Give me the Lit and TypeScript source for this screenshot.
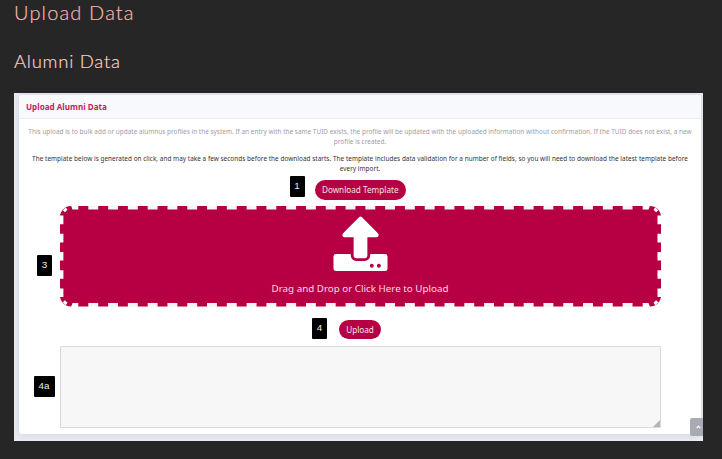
import { LitElement, html, svg, css } from "lit";
import { customElement } from "lit/decorators.js";

const range = (n: number) => Array.from({ length: n }, (_, i) => i);

@customElement("app-root")
export class AppRoot extends LitElement {
  static styles = css`
    :host { display: block; height: 459px; overflow: hidden; background: #262626; font-family: "Noto Sans", sans-serif; }
    * { box-sizing: border-box; }
    h1, h2, h3, p { margin: 0; font-weight: 400; }
    .page { padding: 0 19px 0 14px; height: 459px; display: flex; flex-direction: column; }
    h1, h2 { font-family: Lato, sans-serif; font-weight: 300; white-space: nowrap; }
    h1 { font-size: 20px; line-height: 24px; color: #f9b5b2; letter-spacing: 1.15px; -webkit-text-stroke: .2px #f9b5b2; }
    h2 { font-size: 18.5px; line-height: 26px; margin-top: 24px; margin-bottom: 19px; color: #fdd0ce; letter-spacing: .75px; -webkit-text-stroke: .2px #fdd0ce; }
    .shot { position: relative; height: 348px; background: #eaebf2; padding: 2px 2px 7px 5px; overflow: hidden; }
    .card { height: 339px; background: #fff; border-radius: 3px; box-shadow: 0 1px 7px #58688a2e; overflow: hidden; }
    h3 { height: 24px; line-height: 24px; padding-left: 7px; font-size: 8.1px; font-weight: 700; color: #c42460; background: #f8f9fc; border-bottom: 1px solid #eceef5; white-space: nowrap; }
    .copy { text-align: center; white-space: nowrap; font-size: 6.4px; line-height: 10px; color: #9c9da8; }
    .first { padding-top: 8px; letter-spacing: .032px; }
    .second { padding-top: 7px; color: #333; letter-spacing: .047px; }
    .row { display: flex; align-items: flex-start; }
    .tag { background: #000; color: #eee; border-radius: 1px; width: 15px; height: 21px; line-height: 20px; text-align: center; font-family: "Liberation Sans", sans-serif; font-size: 9.8px; flex: none; }
    .pill { background: #b70043; color: #f7e0e8; border-radius: 10px; height: 19.5px; line-height: 20px; text-align: center; font-size: 8.2px; white-space: nowrap; }
    .download { height: 26px; padding: 2px 0 0 270.5px; gap: 10px; }
    .download .pill { width: 91.5px; margin-top: 4px; }
    .drop { margin-top: 5.5px; padding-left: 18px; align-items: center; gap: 8px; }
    .drop .tag { margin-top: 18px; }
    .zone { width: 601px; height: 101px; position: relative; flex: none; display: flex; flex-direction: column; align-items: center; }
    .frame { position: absolute; inset: 0; }
    .icon { position: relative; margin: 10px 0 0 0; }
    .zone p { position: relative; color: #f6dbe4; font-size: 9.8px; line-height: 14px; margin: 11px 1px 0 0; white-space: nowrap; }
    .send { padding: 11px 0 0 293px; gap: 12px; }
    .send .pill { width: 42px; margin-top: 2px; }
    .log { margin-top: 7px; padding-left: 14.5px; align-items: center; gap: 5px; }
    .log .tag { width: 21px; margin-bottom: 2px; }
    .area { width: 601.5px; height: 82px; background: #f7f7f7; border: 1px solid #d9d9d9; border-radius: 1px; display: flex; align-items: flex-end; justify-content: flex-end; }
    .top { position: absolute; right: 0; bottom: 5px; width: 13px; height: 18px; background: #a9aab3; border-radius: 2px 0 0 2px; display: flex; align-items: center; justify-content: center; padding-left: 4px; }
    svg { display: block; flex: none; }
  `;

  private corner(flip: string) {
    return svg`<path transform=${flip} fill="#fff" d="M2.800 4.200 5.800 1.300 7.500 3.700 4.900 6.300zM11 -.5h7.300v4H12.500z" />`;
  }

  render() {
    return html`<main class="page">
      <h1>Upload Data</h1>
      <h2>Alumni Data</h2>
      <section class="shot">
        <div class="card">
          <h3>Upload Alumni Data</h3>
          <p class="copy first">This upload is to bulk add or update alumnus profiles in the system. If an entry with the same TUID exists, the profile will be updated with the uploaded information without confirmation. If the TUID does not exist, a new<br />profile is created.</p>
          <p class="copy second">The template below is generated on click, and may take a few seconds before the download starts. The template includes data validation for a number of fields, so you will need to download the latest template before<br />every import.</p>
          <div class="row download"><span class="tag">1</span><span class="pill">Download Template</span></div>
          <div class="row drop">
            <span class="tag">3</span>
            <div class="zone">
              <svg class="frame" width="601" height="101">
                <rect width="601" height="100.5" rx="11" fill="#b70043" />
                ${range(28).map((i) => svg`<path fill="#f8f5f6" d="M${28.3 + i * 19.79} -.5h9.900v4h-9.900zM${28.3 + i * 19.79} 97h9.900v4h-9.900z" />`)}
                ${range(5).map((i) => svg`<path fill="#fff" d="M-.5 ${9.6 + i * 18.2}h3.900v8.600h-3.900zM597.500 ${9.6 + i * 18.2}h4v8.600h-4z" />`)}
                ${this.corner("")}
                ${this.corner("translate(601 0) scale(-1 1)")}
                ${this.corner("translate(0 100.5) scale(1 -1)")}
                ${this.corner("translate(601 100.5) scale(-1 -1)")}
              </svg>
              <svg class="icon" width="55" height="55" viewBox="0 0 56 55" preserveAspectRatio="none" fill="#fff">
                <path d="M26.500 1.200q1.500-1.200 3 0l16.200 16q2 3-1 4H35v18q0 3-3 3H24q-3 0-3-3v-18H11.300q-3-1-1-4z" />
                <path fill-rule="evenodd" d="M3 38H18q0 7 6 7h8q6 0 6-7H53q2.500 0 2.500 2.500V52.500q0 2.500-2.500 2.500H3Q.5 55 .5 52.500V40.500q0-2.500 2.500-2.500zm36.500 9.700a2 2 0 1 0 .01 0zm7.200 0a2 2 0 1 0 .01 0z" />
              </svg>
              <p>Drag and Drop or Click Here to Upload</p>
            </div>
          </div>
          <div class="row send"><span class="tag">4</span><span class="pill">Upload</span></div>
          <div class="row log"><span class="tag">4a</span>
            <div class="area"><svg width="7" height="7"><path d="M7 0V7H0z" fill="#b5b5b5" /></svg></div>
          </div>
        </div>
        <div class="top"><svg width="5" height="4" viewBox="0 0 5 4"><path d="M.7 3.200 2.500 1.200 4.300 3.200" fill="none" stroke="#fff" stroke-width="1.200" /></svg></div>
      </section>
    </main>`;
  }
}
